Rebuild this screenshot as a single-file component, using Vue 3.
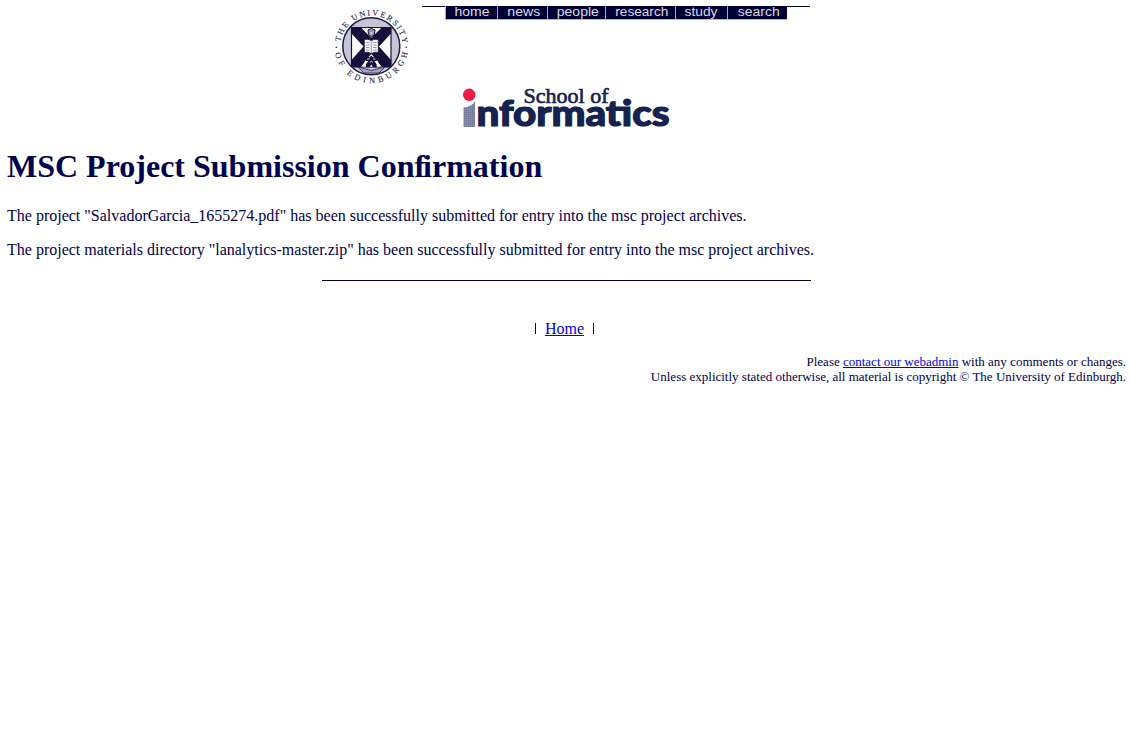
<script setup>
const navItems = [
  { label: 'home', cell: 52, text: 35, x: 26 },
  { label: 'news', cell: 50, text: 33, x: 25.8 },
  { label: 'people', cell: 58, text: 42, x: 29.8 },
  { label: 'research', cell: 70, text: 53, x: 35.8 },
  { label: 'study', cell: 52, text: 33, x: 25 },
  { label: 'search', cell: 60, text: 42, x: 30.8 },
]
const files = [
  { kind: 'project', name: 'SalvadorGarcia_1655274.pdf' },
  { kind: 'project materials directory', name: 'lanalytics-master.zip' },
]
</script>

<template>
  <div class="page">
    <header class="masthead">
      <svg class="crest" width="90" height="84" viewBox="326 5 90 84">
        <defs>
          <path id="arc-top" d="M340 46.8 A31.3 31.3 0 0 1 402.6 46.8" />
          <path id="arc-bottom" d="M334.5 46.3 A36.8 36.8 0 0 0 408.1 46.3" />
          <clipPath id="disc"><circle cx="371.3" cy="46.3" r="28.5" /></clipPath>
        </defs>
        <text class="ring"><textPath href="#arc-top" startOffset="5" textLength="90">THE UNIVERSITY</textPath></text>
        <text class="ring"><textPath href="#arc-bottom" startOffset="7" textLength="102">OF EDINBURGH</textPath></text>
        <circle cx="336.3" cy="47.3" r=".8" class="ink" />
        <circle cx="406.3" cy="47.3" r=".8" class="ink" />
        <circle cx="371.3" cy="46.3" r="28.5" fill="#c5c5d6" />
        <g clip-path="url(#disc)">
          <rect x="351.5" y="27.5" width="39.5" height="39.5" fill="#fff" />
          <path d="M351.5 27.5H361L371.3 38 381.6 27.5H391V33.5L379 46.5 391 60V67H382L371.3 55 360.6 67H351.5V60L363.5 46.5 351.5 33.5Z" class="ink" />
          <path d="M351.5 27.5h39.5v39.5h-39.5z" fill="none" stroke="#160f3b" stroke-width="1.2" />
          <path d="M358 67l13.3 3.5L385 67l-6 6h-15z" fill="#a5a4bd" stroke="#2a2450" stroke-width=".8" />
        </g>
        <circle cx="371.3" cy="46.3" r="28.5" fill="none" stroke="#211a47" stroke-width="1.5" />
        <path d="M364.3 39.5q3.5-1 7 1 3.5-2 7-1v13q-3.5-1-7 1-3.5-2-7-1z" fill="#f7f7fa" stroke="#282249" stroke-width=".9" />
        <path d="M371.3 40.5v12.5M366 42.5h3.5M366 45h3.5M366 47.5h3.5M366 50h3.5M373 42.5h3.5M373 45h3.5M373 47.5h3.5M373 50h3.5" stroke="#85829c" stroke-width=".8" />
        <path d="M368 30l3.3-1.5 3.7 1.5-.7 5-3 2-2.8-2.5z" fill="#9390ac" stroke="#160f3b" />
        <path d="M370 32l3 2m-3 .5l3-3" stroke="#fff" stroke-width=".6" />
        <path d="M362.5 66.5l2.5-5.5L371.3 54l6.3 7 2.5 5.5z" fill="#fff" />
        <path d="M365 58.5l3-2.2 1.4 1.2 1.9-2 1.9 2 1.4-1.2 3 2.2-1 2.5h-2.3l2.3 3.2v3h-3.6l-1.7-2.7-1.7 2.7H366v-3l2.3-3.2H366z" class="ink" />
        <path d="M367 59h2.5m3.5 0h2.5M369.7 62.5l1.6-1.3 1.6 1.3" fill="none" stroke="#fff" stroke-width=".8" />
      </svg>
      <div class="side">
        <div class="navline">
          <nav class="nav">
            <svg v-for="item in navItems" :key="item.label" class="cell" :width="item.cell" height="13">
              <text :x="item.x" y="10" text-anchor="middle" :textLength="item.text" lengthAdjust="spacingAndGlyphs">{{ item.label }}</text>
            </svg>
          </nav>
        </div>
      </div>
    </header>

    <div class="brand">
      <svg width="212" height="44" viewBox="461 86 212 44">
        <defs>
          <pattern id="screen" width="2" height="2" patternUnits="userSpaceOnUse">
            <rect width="2" height="2" fill="#868aa9" /><rect width="1" height="1" fill="#6e7396" />
          </pattern>
        </defs>
        <circle cx="469.2" cy="94.8" r="6.2" fill="#ed1a46" />
        <path d="M463.5 107.5Q471 107 475 101.5V127H463.5Z" fill="url(#screen)" />
        <text x="523.5" y="102.5" class="school" textLength="85" lengthAdjust="spacingAndGlyphs">School of</text>
        <text x="476.5" y="126.2" class="informatics" textLength="193" lengthAdjust="spacingAndGlyphs">nformatics</text>
      </svg>
    </div>

    <main>
      <h1>MSC Project Submission Con<span class="tight">f</span>irmation</h1>
      <p v-for="f in files" :key="f.name">The {{ f.kind }} "{{ f.name }}" has been successfully submitted for entry into the msc project archives.</p>
    </main>

    <div class="rule"></div>
    <div class="home"><i class="bar"></i><a href="#">Home</a><i class="bar"></i></div>
    <footer>
      Please <a href="#">contact our webadmin</a> with any comments or changes.<br />
      Unless explicitly stated otherwise, all material is copyright © The University of Edinburgh.
    </footer>
  </div>
</template>

<style>
body { margin: 0; background: #fff; }
</style>

<style scoped>
.page { box-sizing: border-box; width: 1130px; height: 740px; padding: 5px 4px 0 7px; overflow: hidden; color: #000050; font: 16px/18px "Liberation Serif", "Times New Roman", serif; }
.masthead { display: flex; height: 81px; padding-left: 319px; }
.crest { flex: none; }
.side { padding: 1px 0 0 6px; }
.navline { width: 388px; border-top: 1px solid #000033; }
.nav { display: flex; width: 342px; margin: -1px 0 0 23px; background: #000033; border-bottom: 1px solid #b5b3c9; }
.cell { display: block; box-sizing: border-box; flex: none; border-left: 1px solid #aaa9c0; overflow: visible; }
.cell text { font: 12.5px "Liberation Sans", Arial, sans-serif; fill: #d9d9e4; }
.ring { font: 400 8.2px "Liberation Serif", serif; fill: #37325a; stroke: #37325a; stroke-width: .15px; }
.ink { fill: #160f3b; }
.brand { height: 44px; padding-left: 454px; }
.brand svg { display: block; overflow: visible; }
.school { font: 400 20px "Liberation Serif", serif; fill: #14224f; stroke: #14224f; stroke-width: .6px; }
.informatics { font: 900 36px Lato, sans-serif; fill: #14224f; stroke: #14224f; stroke-width: 1.2px; }
h1 { margin: 18px 0 22px; font-size: 32px; line-height: 37px; font-weight: 700; white-space: nowrap; }
.tight { letter-spacing: -2px; }
p { margin: 0 0 16px; height: 18px; white-space: nowrap; }
.rule { width: 489px; height: 1px; margin: 21px 0 0 315px; background: #000033; }
.home { display: flex; justify-content: center; align-items: center; gap: 9px; margin-top: 39px; height: 18px; padding-right: 4px; }
.bar { width: 1px; height: 11px; margin-top: -1px; background: #000030; }
a { color: #0000ee; text-decoration: underline; }
footer { margin-top: 16px; text-align: right; font-size: 13px; line-height: 15px; }
</style>
